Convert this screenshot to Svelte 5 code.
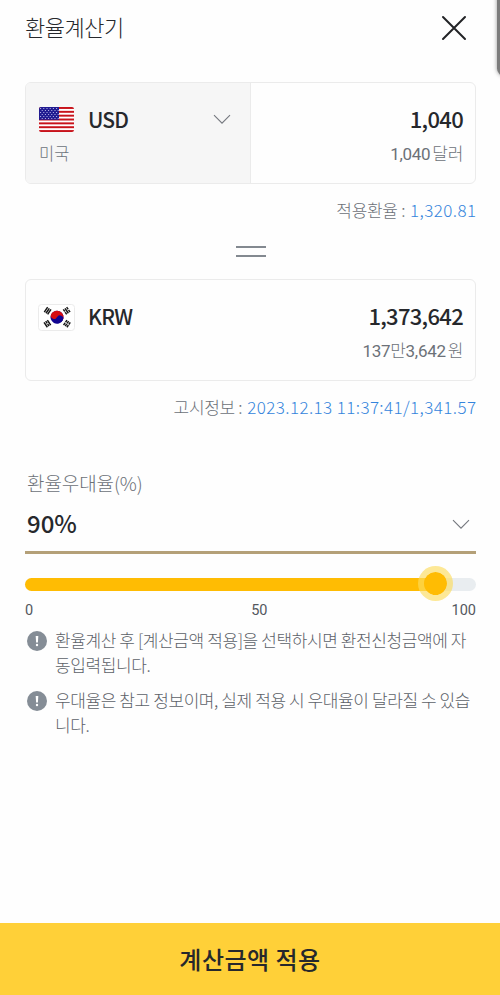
<script>
  let rate = $state(90);
  const stripes = [0, 2, 4, 6, 8, 10, 12];
  const stars = Array.from({ length: 36 }, (_, i) => ({
    x: 1.6 + (i % 6) * 3.2 + (Math.floor(i / 6) % 2) * 1.6,
    y: 1.5 + Math.floor(i / 6) * 2
  })).filter((s) => s.x < 19.5);
  const trigrams = [
    { x: 9.5, y: 6.7, r: -56, split: [] },
    { x: 28.8, y: 6.7, r: 56, split: [0, 2] },
    { x: 9.5, y: 19.6, r: 56, split: [1] },
    { x: 28.8, y: 19.6, r: -56, split: [0, 1, 2] }
  ];
</script>

{#snippet chevron()}
  <svg class="chevron" width="18" height="11" viewBox="0 0 18 11"><path d="M1 1.2 9 9.2 17 1.2" /></svg>
{/snippet}

{#snippet notice()}
  <svg class="notice" width="20" height="20" viewBox="0 0 20 20">
    <circle cx="10" cy="10" r="10" fill="#858d96" />
    <path d="M8.7 5h2.6l-.4 6.5H9.1z" fill="#fff" /><circle cx="10" cy="14" r="1.2" fill="#fff" />
  </svg>
{/snippet}

<main>
  <div class="edge"></div>
  <header>
    <h1>환율계산기</h1>
    <button class="close" aria-label="닫기">
      <svg width="26" height="26" viewBox="0 0 26 26"><path d="M2 2 24 24M24 2 2 24" /></svg>
    </button>
  </header>

  <section class="card">
    <div class="currency selected">
      <div class="line">
        <svg class="flag" width="35" height="25" viewBox="0 0 35 25">
          <defs><clipPath id="us"><rect width="35" height="25" rx="2" /></clipPath></defs>
          <g clip-path="url(#us)">
            <rect width="35" height="25" fill="#fff" />
            {#each stripes as s}<rect y={s * 1.923} width="35" height="1.95" fill="#c8131b" />{/each}
            <rect width="20" height="12.8" fill="#211b91" />
            {#each stars as s}<circle cx={s.x} cy={s.y} r=".6" fill="#c9c9f3" />{/each}
          </g>
        </svg>
        <span class="code">USD</span>
        {@render chevron()}
      </div>
      <div class="country">미국</div>
    </div>
    <div class="amount">
      <div class="value">1,040</div>
      <div class="words"><span>1,040</span><span class="unit">달러</span></div>
    </div>
  </section>
  <div class="info"><span class="key">적용환율 :</span><span class="blue">1,320.81</span></div>

  <div class="equals"><i></i><i></i></div>

  <section class="card">
    <div class="currency">
      <div class="line">
        <svg class="flag kr" width="37" height="27" viewBox="0 0 37 27">
          <rect x=".5" y=".5" width="36" height="26" rx="3" fill="#fff" stroke="#ebebeb" />
          <g transform="translate(19 13.2) rotate(28)">
            <circle r="6.5" fill="#110491" />
            <path d="M-6.5 0A6.5 6.5 0 0 1 6.5 0Z" fill="#d60c12" />
            <circle cx="-3.25" r="3.25" fill="#d60c12" /><circle cx="3.25" r="3.25" fill="#110491" />
          </g>
          {#each trigrams as t}
            <g transform="translate({t.x} {t.y}) rotate({t.r})">
              {#each [0, 1, 2] as n}
                <rect x="-3" y={-2.6 + n * 2} width="6" height="1.5" fill="#161616" />
                {#if t.split.includes(n)}<rect x="-.4" y={-2.7 + n * 2} width=".8" height="1.7" fill="#fff" />{/if}
              {/each}
            </g>
          {/each}
        </svg>
        <span class="code krw">KRW</span>
      </div>
    </div>
    <div class="amount">
      <div class="value">1,373,642</div>
      <div class="words"><span>137<b>만</b>3,642</span><span class="unit">원</span></div>
    </div>
  </section>
  <div class="info"><span class="key">고시정보 :</span><span class="blue">2023.12.13 11:37:41/1,341.57</span></div>

  <section class="rate">
    <div class="label">환율우대율(%)</div>
    <div class="select"><span>{rate}%</span>{@render chevron()}</div>
    <div class="track">
      <div class="fill" style="width: {rate + 1}%"></div>
      <div class="thumb" style="left: {rate + 1}%"></div>
    </div>
    <div class="scale"><span>0</span><span class="mid">50</span><span>100</span></div>
  </section>

  <ul>
    <li>{@render notice()}<p>환율계산 후 [계산금액 적용]을 선택하시면 환전신청금액에 자<br />동입력됩니다.</p></li>
    <li>{@render notice()}<p>우대율은 참고 정보이며, 실제 적용 시 우대율이 달라질 수 있습<br />니다.</p></li>
  </ul>

  <button class="apply">계산금액 적용</button>
</main>

<style>
  main {
    position: relative;
    box-sizing: border-box;
    width: 500px;
    height: 995px;
    overflow: hidden;
    display: flex;
    flex-direction: column;
    background: #fefefe;
    color: #26282c;
    font-family: "Noto Sans CJK KR", sans-serif;
    font-weight: 300;
    white-space: nowrap;
  }
  button { border: 0; padding: 0; background: none; font-family: inherit; color: inherit; }
  .edge {
    position: absolute;
    top: -10px;
    right: -12px;
    width: 15px;
    height: 86px;
    border-radius: 8px;
    background: #7c7c7c;
    box-shadow: 0 0 4px #999;
  }
  header { display: flex; align-items: center; justify-content: space-between; height: 56px; margin: 0 33px 26px 25px; }
  h1 { margin: 0; padding-bottom: 4px; font-size: 22px; font-weight: 300; letter-spacing: -0.5px; }
  .close { display: flex; width: 26px; height: 26px; }
  .close path { fill: none; stroke: #222326; stroke-width: 2; stroke-linecap: round; }
  .card {
    box-sizing: border-box;
    display: flex;
    width: 451px;
    height: 102px;
    margin-left: 25px;
    border: 1px solid #ebebeb;
    border-radius: 6px;
    overflow: hidden;
    flex: none;
  }
  .currency { box-sizing: border-box; width: 225px; padding: 19px 19px 0 13px; }
  .selected { background: #f6f6f6; border-right: 1px solid #ebebeb; }
  .line { display: flex; align-items: center; height: 34px; }
  .flag { margin-right: 14px; }
  .kr { margin: 3px 13px 0 -1px; }
  .code { font-weight: 500; font-size: 21px; line-height: 34px; letter-spacing: -0.9px; }
  .krw { letter-spacing: -0.8px; }
  .chevron { margin-left: auto; }
  .chevron path { fill: none; stroke: #74787e; stroke-width: 1.1; }
  .country { height: 34px; line-height: 34px; font-size: 16.5px; color: #6c737b; }
  .amount { flex: 1; padding: 18px 12px 0 0; text-align: right; }
  .value { font-weight: 500; font-size: 22px; line-height: 34px; letter-spacing: -0.7px; padding-right: 0; }
  .words { height: 34px; padding-top: 2px; line-height: 34px; font-size: 17px; color: #6c7178; font-family: Roboto, "Noto Sans CJK KR", sans-serif; font-weight: 400; letter-spacing: -0.3px; }
  .words b { font-weight: 300; }
  .unit { margin-left: 2px; font-weight: 300; }
  .info { display: flex; justify-content: flex-end; height: 52px; line-height: 51px; margin-right: 24px; font-size: 17px; flex: none; }
  .key { color: #6c7178; margin-right: 5px; letter-spacing: -0.3px; }
  .blue { color: #3484dc; letter-spacing: 0.4px; margin-right: -0.4px; }
  .equals { display: flex; flex-direction: column; align-items: center; justify-content: space-between; height: 11px; margin: 10px 0 22px; flex: none; }
  .equals i { width: 30px; height: 2px; margin-left: 2px; background: #838990; }
  .rate { margin: 33px 24px 0 25px; }
  .label { height: 34px; line-height: 34px; padding-left: 2px; font-size: 19px; letter-spacing: -0.1px; color: #6c7178; }
  .select { display: flex; align-items: center; height: 51px; padding: 0 6px 0 2px; border-bottom: 3px solid #b4a078; }
  .select span { font-weight: 500; font-size: 24px; line-height: 46px; padding-bottom: 5px; }
  .select :global(.chevron) { margin-bottom: 3px; }
  .track { position: relative; height: 13px; margin-top: 24px; border-radius: 7px; background: #e9edf0; }
  .fill { height: 13px; border-radius: 7px; background: #ffbc03; }
  .thumb {
    position: absolute;
    top: 5px;
    box-sizing: border-box;
    width: 35px;
    height: 35px;
    margin: -17px 0 0 -17px;
    border: 6px solid rgba(252, 220, 93, .65);
    border-radius: 50%;
    background: #ffbc03;
    background-clip: padding-box;
  }
  .scale { display: flex; justify-content: space-between; height: 36px; font: 400 14.5px/39px Roboto, sans-serif; color: #54585e; }
  .mid { margin-left: 34px; }
  ul { list-style: none; margin: 0 24px 0 27px; padding: 0; }
  li { display: flex; align-items: flex-start; margin-bottom: 10px; }
  .notice { margin: 4px 8px 0 0; flex: none; }
  p { margin: 0; font-size: 17px; line-height: 25px; letter-spacing: -0.4px; color: #5c6168; }
  .apply { width: 500px; height: 72px; padding-bottom: 2px; margin-top: auto; background: #ffd038; font-size: 24px; font-weight: 500; letter-spacing: 0.5px; flex: none; }
</style>
